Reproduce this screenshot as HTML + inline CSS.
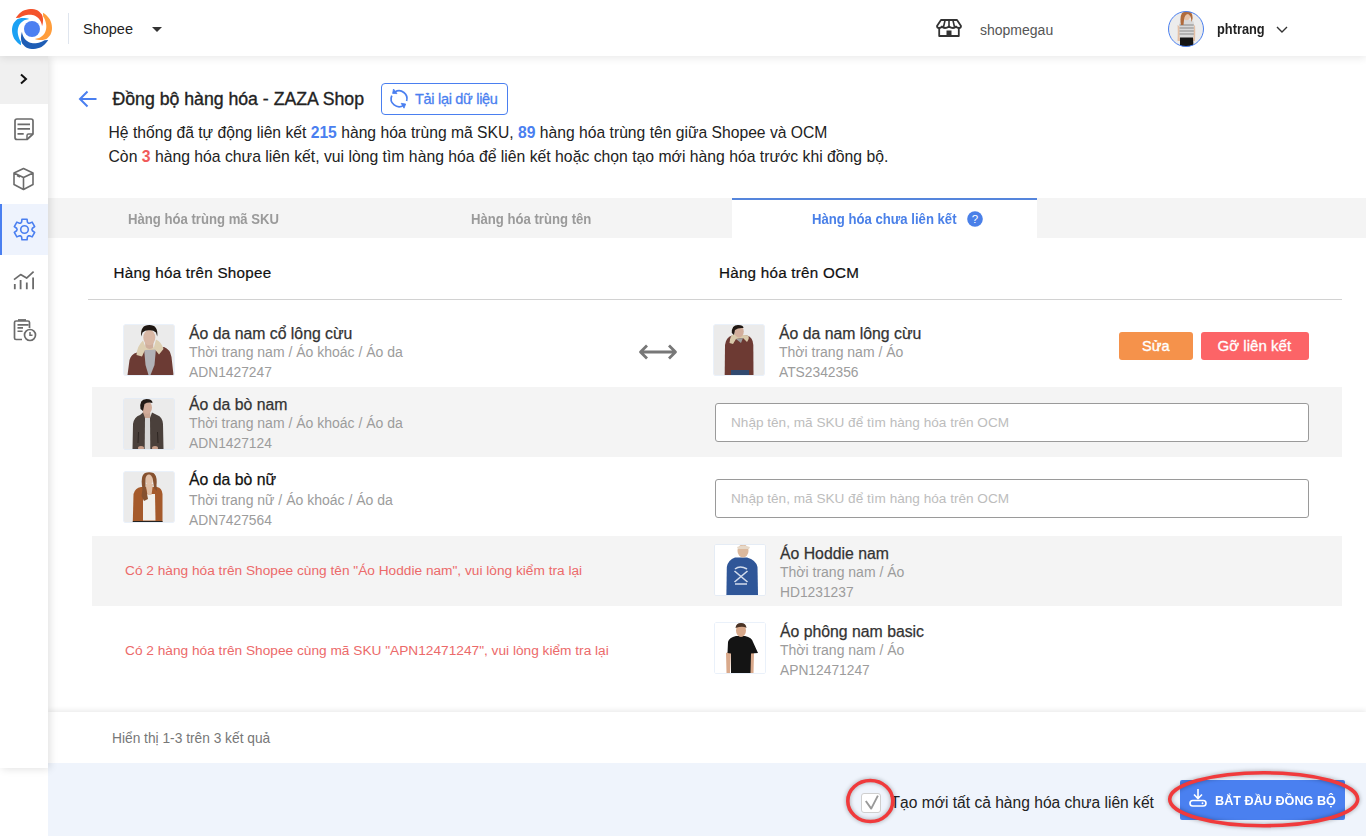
<!DOCTYPE html>
<html><head><meta charset="utf-8"><title>Đồng bộ hàng hóa</title><style>
*{margin:0;padding:0}
html,body{width:1366px;height:836px;overflow:hidden;background:#fff}
body{position:relative;font-family:"Liberation Sans",sans-serif}
.t{position:absolute;white-space:nowrap}
.r{position:absolute;display:block}
.img{width:50px;height:50px;border-radius:1px;overflow:hidden;box-shadow:0 0 0 0.5px #d5e3f5}
.img svg{display:block}
b{font-weight:700}
</style></head>
<body>
<div class="r" style="left:0px;top:0px;width:1366px;height:56px;background:#fff;box-shadow:0 2px 8px rgba(0,0,0,0.09);z-index:5"></div>
<svg class="r" style="left:12px;top:9px;z-index:6" width="40" height="40" viewBox="-20 -20 40 40"><path d="M -16.25 -10.96 L -15.19 -12.59 L -13.97 -14.12 L -12.60 -15.53 L -11.08 -16.81 L -9.43 -17.93 L -7.62 -18.77 L -5.71 -19.36 L -3.76 -19.77 L -1.79 -19.98 L 0.18 -19.98 L 2.13 -19.65 L 4.00 -19.13 L 5.80 -18.43 L 7.36 -17.22 L 8.72 -15.87 L 9.88 -14.41 L 10.58 -12.58 L 10.92 -10.64 L 11.04 -8.81 L 10.90 -7.07 L 10.75 -5.55 L 10.45 -4.15 L 10.00 -2.87 L 9.86 -3.90 L 9.61 -4.92 L 9.30 -5.97 L 8.92 -7.04 L 8.42 -8.09 L 7.81 -9.11 L 7.08 -10.09 L 6.22 -11.01 L 5.26 -11.86 L 4.18 -12.60 L 2.99 -13.18 L 1.73 -13.65 L 0.40 -14.00 L -0.97 -14.22 L -2.39 -14.31 L -3.83 -14.25 L -5.29 -14.05 L -6.74 -13.70 L -8.20 -13.26 L -9.69 -12.72 L -11.15 -12.01 L -12.57 -11.14 Z" fill="#f4532c"/><path d="M -16.25 -10.96 L -15.19 -12.59 L -13.97 -14.12 L -12.60 -15.53 L -11.08 -16.81 L -9.43 -17.93 L -7.62 -18.77 L -5.71 -19.36 L -3.76 -19.77 L -1.79 -19.98 L 0.18 -19.98 L 2.13 -19.65 L 4.00 -19.13 L 5.80 -18.43 L 7.36 -17.22 L 8.72 -15.87 L 9.88 -14.41 L 10.58 -12.58 L 10.92 -10.64 L 11.04 -8.81 L 10.90 -7.07 L 10.75 -5.55 L 10.45 -4.15 L 10.00 -2.87 L 9.86 -3.90 L 9.61 -4.92 L 9.30 -5.97 L 8.92 -7.04 L 8.42 -8.09 L 7.81 -9.11 L 7.08 -10.09 L 6.22 -11.01 L 5.26 -11.86 L 4.18 -12.60 L 2.99 -13.18 L 1.73 -13.65 L 0.40 -14.00 L -0.97 -14.22 L -2.39 -14.31 L -3.83 -14.25 L -5.29 -14.05 L -6.74 -13.70 L -8.20 -13.26 L -9.69 -12.72 L -11.15 -12.01 L -12.57 -11.14 Z" fill="#ff9d3b" transform="rotate(90)"/><path d="M -16.25 -10.96 L -15.19 -12.59 L -13.97 -14.12 L -12.60 -15.53 L -11.08 -16.81 L -9.43 -17.93 L -7.62 -18.77 L -5.71 -19.36 L -3.76 -19.77 L -1.79 -19.98 L 0.18 -19.98 L 2.13 -19.65 L 4.00 -19.13 L 5.80 -18.43 L 7.36 -17.22 L 8.72 -15.87 L 9.88 -14.41 L 10.58 -12.58 L 10.92 -10.64 L 11.04 -8.81 L 10.90 -7.07 L 10.75 -5.55 L 10.45 -4.15 L 10.00 -2.87 L 9.86 -3.90 L 9.61 -4.92 L 9.30 -5.97 L 8.92 -7.04 L 8.42 -8.09 L 7.81 -9.11 L 7.08 -10.09 L 6.22 -11.01 L 5.26 -11.86 L 4.18 -12.60 L 2.99 -13.18 L 1.73 -13.65 L 0.40 -14.00 L -0.97 -14.22 L -2.39 -14.31 L -3.83 -14.25 L -5.29 -14.05 L -6.74 -13.70 L -8.20 -13.26 L -9.69 -12.72 L -11.15 -12.01 L -12.57 -11.14 Z" fill="#1e5db5" transform="rotate(180)"/><path d="M -16.25 -10.96 L -15.19 -12.59 L -13.97 -14.12 L -12.60 -15.53 L -11.08 -16.81 L -9.43 -17.93 L -7.62 -18.77 L -5.71 -19.36 L -3.76 -19.77 L -1.79 -19.98 L 0.18 -19.98 L 2.13 -19.65 L 4.00 -19.13 L 5.80 -18.43 L 7.36 -17.22 L 8.72 -15.87 L 9.88 -14.41 L 10.58 -12.58 L 10.92 -10.64 L 11.04 -8.81 L 10.90 -7.07 L 10.75 -5.55 L 10.45 -4.15 L 10.00 -2.87 L 9.86 -3.90 L 9.61 -4.92 L 9.30 -5.97 L 8.92 -7.04 L 8.42 -8.09 L 7.81 -9.11 L 7.08 -10.09 L 6.22 -11.01 L 5.26 -11.86 L 4.18 -12.60 L 2.99 -13.18 L 1.73 -13.65 L 0.40 -14.00 L -0.97 -14.22 L -2.39 -14.31 L -3.83 -14.25 L -5.29 -14.05 L -6.74 -13.70 L -8.20 -13.26 L -9.69 -12.72 L -11.15 -12.01 L -12.57 -11.14 Z" fill="#1ba1f4" transform="rotate(270)"/><circle cx="0" cy="0" r="8" fill="#4c80f1"/></svg>
<div class="r" style="left:68px;top:13px;width:1px;height:31px;background:#dfe5ee;z-index:6"></div>
<div class="t" style="left:83px;top:20px;font-size:14.5px;line-height:19px;color:#222;font-weight:400;z-index:6">Shopee</div>
<svg class="r" style="left:152px;top:27px;z-index:6" width="10" height="5" viewBox="0 0 10 5"><path d="M0 0 H10 L5 5 Z" fill="#333"/></svg>
<svg class="r" style="left:936px;top:18px;z-index:6" width="26" height="20" viewBox="0 0 26 20"><path d="M5 2 H21 L25 8 Q25 10 23 10 Q21 10 20 8.5 Q19 10 17 10 Q15 10 13 8.5 Q11 10 9 10 Q7 10 6 8.5 Q5 10 3 10 Q1 10 1 8 Z" fill="none" stroke="#333" stroke-width="1.8" stroke-linejoin="round"/><path d="M9 2.5 L7.5 9 M13 2.5 V9 M17 2.5 L18.5 9" stroke="#333" stroke-width="1.6"/><path d="M3.2 10 V18 H22.8 V10" fill="none" stroke="#333" stroke-width="1.8" stroke-linejoin="round"/><rect x="10.5" y="12.5" width="5" height="5.5" fill="#333"/></svg>
<div class="t" style="left:980px;top:21px;font-size:14px;line-height:18px;color:#555;font-weight:400;z-index:6">shopmegau</div>
<svg class="r" style="left:1168px;top:11px;z-index:6" width="36" height="36" viewBox="0 0 36 36"><defs><clipPath id="av"><circle cx="18" cy="18" r="17.5"/></clipPath></defs><g clip-path="url(#av)"><rect width="36" height="36" fill="#ececec"/><path d="M9.5 14 Q10 20 9.5 30 L12 30 L12.5 16 Z M27 14 Q27.5 20 27 30 L24.5 30 L24.5 16 Z" fill="#e3bfa5"/><path d="M11.5 12 Q12.5 9 16 8.5 L22 8.5 Q25.5 9 26 12 L25.5 27 L11.5 27 Z" fill="#d9d9d9"/><path d="M11.5 14 H25.8 M11.5 17 H25.8 M11.5 20 H25.8 M11.5 23 H25.8" stroke="#8a8a8a" stroke-width="1.1"/><path d="M12 26.5 H25 L25.5 36 H12 Z" fill="#141414"/><ellipse cx="18.5" cy="5" rx="3.6" ry="4.3" fill="#e6c3aa"/><path d="M13 14 Q11.5 6 14 2 Q17 -0.5 21.5 0.5 Q25 2 24.5 8 L23.5 11 Q23 4 20 3 Q16.5 3.5 16 9 L15.5 14 Z" fill="#b06b3c"/></g><circle cx="18" cy="18" r="17.5" fill="none" stroke="#4a7fef" stroke-width="1"/></svg>
<div class="t" style="left:1216.5px;top:20px;font-size:14px;line-height:18px;color:#222;font-weight:700;transform:scaleX(0.915);transform-origin:0 0;z-index:6">phtrang</div>
<svg class="r" style="left:1276px;top:26px;z-index:6" width="12" height="8" viewBox="0 0 12 8"><path d="M1 1 L6 6 L11 1" fill="none" stroke="#333" stroke-width="1.4"/></svg>
<div class="r" style="left:0px;top:56px;width:48px;height:712px;background:#fff;box-shadow:2px 1px 8px rgba(0,0,0,0.12);z-index:4"></div>
<div class="r" style="left:0px;top:56px;width:48px;height:48px;background:#f0f0f0;z-index:4"></div>
<svg class="r" style="left:19px;top:73px;z-index:4" width="10" height="12" viewBox="0 0 10 12"><path d="M2 1.5 L7 6 L2 10.5" fill="none" stroke="#111" stroke-width="2"/></svg>
<svg class="r" style="left:13px;top:117px;z-index:4" width="22" height="24" viewBox="0 0 22 24"><path d="M4 2 H18 Q20 2 20 4 V17 L14 22.5 H4 Q2 22.5 2 20.5 V4 Q2 2 4 2 Z" fill="none" stroke="#6b6b6b" stroke-width="1.7" stroke-linejoin="round"/><path d="M20 17 H15.5 Q14 17 14 18.5 V22.5" fill="none" stroke="#6b6b6b" stroke-width="1.5"/><path d="M4.5 7.3 H17 M4.5 11.9 H17 M4.5 16.8 H10.7" stroke="#6b6b6b" stroke-width="1.7"/></svg>
<svg class="r" style="left:12px;top:167px;z-index:4" width="23" height="24" viewBox="0 0 23 24"><path d="M11.5 1.5 L21 6 V17.5 L11.5 22.5 L2 17.5 V6 Z M2 6 L11.5 10.5 L21 6 M11.5 10.5 V22.5" fill="none" stroke="#6b6b6b" stroke-width="1.6" stroke-linejoin="round"/><path d="M5 8.5 L8 10" stroke="#6b6b6b" stroke-width="1.4"/></svg>
<div class="r" style="left:0px;top:204px;width:48px;height:51px;background:#eef3fd;z-index:4"></div>
<div class="r" style="left:0px;top:204px;width:2px;height:51px;background:#4a7ff0;z-index:4"></div>
<svg class="r" style="left:11.8px;top:217px;z-index:4" width="25" height="25" viewBox="-12.5 -12.5 25 25"><path d="M -3.70 -6.41 L -2.87 -7.47 L -2.56 -10.29 L 2.56 -10.29 L 2.87 -7.47 L 3.70 -6.41 L 5.03 -6.22 L 7.63 -7.36 L 10.19 -2.92 L 7.90 -1.25 L 7.40 0.00 L 7.90 1.25 L 10.19 2.92 L 7.63 7.36 L 5.03 6.22 L 3.70 6.41 L 2.87 7.47 L 2.56 10.29 L -2.56 10.29 L -2.87 7.47 L -3.70 6.41 L -5.03 6.22 L -7.63 7.36 L -10.19 2.92 L -7.90 1.25 L -7.40 0.00 L -7.90 -1.25 L -10.19 -2.92 L -7.63 -7.36 L -5.03 -6.22 Z" fill="none" stroke="#4a7ff0" stroke-width="1.6" stroke-linejoin="round"/><circle r="3.8" fill="none" stroke="#4a7ff0" stroke-width="1.6"/></svg>
<svg class="r" style="left:12px;top:268px;z-index:4" width="24" height="24" viewBox="0 0 24 24"><path d="M2 11.6 L8.6 6.6 L14.6 10.1 L21.6 3.6" fill="none" stroke="#6b6b6b" stroke-width="1.7" stroke-linejoin="round"/><path d="M2.8 16 V21.3 M8.6 12 V21.3 M14.8 14.5 V21.3 M21.1 9.5 V21.3" stroke="#6b6b6b" stroke-width="1.8"/></svg>
<svg class="r" style="left:12px;top:318px;z-index:4" width="26" height="24" viewBox="0 0 26 24"><path d="M10 21.5 H4 Q2.5 21.5 2.5 20 V4.5 Q2.5 3 4 3 H16 Q17.5 3 17.5 4.5 V10" fill="none" stroke="#6b6b6b" stroke-width="1.7"/><path d="M5.5 6.9 H16.6 M5.5 9.9 H11 M5.5 13.2 H10.6" stroke="#6b6b6b" stroke-width="1.6"/><path d="M6 2 H14" stroke="#6b6b6b" stroke-width="1.8"/><circle cx="18" cy="17" r="5.5" fill="#fff" stroke="#6b6b6b" stroke-width="1.7"/><path d="M18 14 V17.3 H20.5" fill="none" stroke="#6b6b6b" stroke-width="1.5"/></svg>
<svg class="r" style="left:78px;top:89px" width="20" height="20" viewBox="0 0 20 20"><path d="M18.5 10 H2.5 M9.5 2.5 L2 10 L9.5 17.5" fill="none" stroke="#4a7ff0" stroke-width="2"/></svg>
<div class="t" style="left:112.5px;top:88px;font-size:17.68px;line-height:23px;color:#222;font-weight:400;-webkit-text-stroke:0.35px #222;">Đồng bộ hàng hóa - ZAZA Shop</div>
<div class="r" style="left:381px;top:83px;width:125px;height:30px;border:1px solid #4a7ff0;border-radius:4px"></div>
<svg class="r" style="left:385px;top:85px" width="28" height="28" viewBox="0 0 28 28"><g fill="none" stroke="#4a7ff0" stroke-width="1.7"><path d="M 6.8 10.6 A 7.9 7.9 0 0 0 18.7 20.1"/><path d="M 21.6 16.0 A 7.9 7.9 0 0 0 9.9 7.0"/></g><path d="M 16.2 18.3 L 20.7 19.0 L 19.0 23.2 Z M 8.5 4.0 L 7.6 8.4 L 12.0 8.6 Z" fill="#4a7ff0" stroke="#4a7ff0" stroke-width="0.8" stroke-linejoin="round"/></svg>
<div class="t" style="left:415px;top:90px;font-size:14.5px;line-height:19px;color:#4a7ff0;font-weight:400;-webkit-text-stroke:0.3px #4a7ff0;letter-spacing:-0.3px;">Tải lại dữ liệu</div>
<div class="t" style="left:108.5px;top:123px;font-size:15.68px;line-height:20px;color:#222;font-weight:400;">Hệ thống đã tự động liên kết <b style="color:#4a7ff0">215</b> hàng hóa trùng mã SKU, <b style="color:#4a7ff0">89</b> hàng hóa trùng tên giữa Shopee và OCM</div>
<div class="t" style="left:108.5px;top:147px;font-size:15.76px;line-height:20px;color:#222;font-weight:400;">Còn <b style="color:#f05a5a">3</b> hàng hóa chưa liên kết, vui lòng tìm hàng hóa để liên kết hoặc chọn tạo mới hàng hóa trước khi đồng bộ.</div>
<div class="r" style="left:48px;top:198px;width:1318px;height:40px;background:#f4f4f4"></div>
<div class="r" style="left:732px;top:198px;width:305px;height:40px;background:#fff;border-top:2px solid #5585dc;box-sizing:border-box"></div>
<div class="t" style="left:128px;top:210px;font-size:14.6px;line-height:19px;color:#9a9a9a;font-weight:700;transform:scaleX(0.9);transform-origin:0 0;">Hàng hóa trùng mã SKU</div>
<div class="t" style="left:471px;top:210px;font-size:14.6px;line-height:19px;color:#9a9a9a;font-weight:700;transform:scaleX(0.9);transform-origin:0 0;">Hàng hóa trùng tên</div>
<div class="t" style="left:812px;top:210px;font-size:14.6px;line-height:19px;color:#4a80e8;font-weight:700;transform:scaleX(0.9);transform-origin:0 0;">Hàng hóa chưa liên kết</div>
<svg class="r" style="left:967px;top:211px" width="16" height="16" viewBox="0 0 16 16"><circle cx="8" cy="8" r="7.8" fill="#4a80e8"/><text x="8" y="12.2" text-anchor="middle" font-family="Liberation Sans" font-weight="400" font-size="11.5" fill="#fff">?</text></svg>
<div class="t" style="left:113.5px;top:263px;font-size:15.2px;line-height:20px;color:#111;font-weight:400;-webkit-text-stroke:0.22px #111;letter-spacing:0.25px;">Hàng hóa trên Shopee</div>
<div class="t" style="left:719px;top:263px;font-size:15.2px;line-height:20px;color:#111;font-weight:400;-webkit-text-stroke:0.22px #111;letter-spacing:0.25px;">Hàng hóa trên OCM</div>
<div class="r" style="left:88px;top:299px;width:1254px;height:1px;background:#d2d2d2"></div>
<div class="r" style="left:92px;top:387px;width:1250px;height:69.5px;background:#f4f4f4"></div>
<div class="r" style="left:92px;top:536px;width:1250px;height:70px;background:#f4f4f4"></div>
<div class="r img" style="left:124px;top:325px"><svg width="50" height="50" viewBox="0 0 50 50"><rect width="50" height="50" fill="#ebebeb"/><path d="M3.5 50 L5.5 35 Q7 29 13 27.5 L20 24 L32 24 L40 22 Q46 24 47.5 32 L49.5 50 Z" fill="#6c3b34"/><path d="M20 23 L32 23 L30.5 40 L26.5 50 L24.5 50 L21.5 40 Z" fill="#b1b1b6"/><path d="M21 16 H29.5 L29 25 H21.5 Z" fill="#cfae9c"/><path d="M12.5 30 Q13 21 19 15.5 L21.5 22 Q25.5 26 30 22 L32 14.5 Q37.5 17 39.5 24 L35 29.5 L31 24.5 L21 25 L18 31.5 Z" fill="#ddcfb2"/><ellipse cx="25.3" cy="12.5" rx="6" ry="7.8" fill="#d8b7a5"/><path d="M17.2 11.5 Q16 0 25.3 0 Q34.5 0 33.2 11.5 L32 7.5 Q29 4.8 25.3 5.2 Q21.5 4.8 18.5 7.5 Z" fill="#1f1713"/></svg></div>
<div class="t" style="left:189px;top:323px;font-size:15.8px;line-height:21px;color:#333;font-weight:400;-webkit-text-stroke:0.25px #333;">Áo da nam cổ lông cừu</div>
<div class="t" style="left:189px;top:343px;font-size:14px;line-height:18px;color:#9c9c9c;font-weight:400;">Thời trang nam / Áo khoác / Áo da</div>
<div class="t" style="left:189px;top:364px;font-size:13.8px;line-height:18px;color:#9c9c9c;font-weight:400;">ADN1427247</div>
<div class="r img" style="left:124px;top:399px"><svg width="50" height="50" viewBox="0 0 50 50"><rect width="50" height="50" fill="#ebebeb"/><path d="M19 11 H26 L26.5 19 H18.5 Z" fill="#c9a592"/><path d="M8.5 50 L9 25 Q10 18 16 16 L19 13.5 L21 19 L26 19 L28 13.5 L33 16 Q38.5 18 39 25 L39.5 50 Z" fill="#4a403b"/><path d="M21 19 L26 19 L26.3 50 L20.7 50 Z" fill="#d6d6d6"/><path d="M14 44 L14.5 33 M34 44 L33.5 33" stroke="#2e2622" stroke-width="1"/><ellipse cx="23" cy="8.5" rx="5" ry="6.5" fill="#d1ac9a"/><path d="M16.5 10 Q15 0 22.5 0 Q28.5 0 28.5 4 Q24 2.8 20.5 5 L19 12 Z" fill="#231b17"/><ellipse cx="17" cy="49" rx="3" ry="2" fill="#caa08c"/><ellipse cx="31" cy="49" rx="3" ry="2" fill="#caa08c"/></svg></div>
<div class="t" style="left:189px;top:394px;font-size:15.8px;line-height:21px;color:#333;font-weight:400;-webkit-text-stroke:0.25px #333;">Áo da bò nam</div>
<div class="t" style="left:189px;top:414px;font-size:14px;line-height:18px;color:#9c9c9c;font-weight:400;">Thời trang nam / Áo khoác / Áo da</div>
<div class="t" style="left:189px;top:435px;font-size:13.8px;line-height:18px;color:#9c9c9c;font-weight:400;">ADN1427124</div>
<div class="r img" style="left:124px;top:472px"><svg width="50" height="50" viewBox="0 0 50 50"><rect width="50" height="50" fill="#ebebeb"/><path d="M8.8 50 L9.5 22 Q11 16 17 15 L33 15 Q38 16 38.5 22 L38.5 50 Z" fill="#a55a2b"/><path d="M19 22 L31 22 L31.5 48.5 L19 48.5 Z" fill="#f1efeb"/><path d="M8.8 49 H38.5 V50 H8.8 Z" fill="#222"/><path d="M21.5 12 L29 12 L27.5 23 L23.5 23 Z" fill="#e0bfa6"/><ellipse cx="25.2" cy="7.5" rx="3.7" ry="5.5" fill="#e2c1a9"/><path d="M18.5 17 Q16 4 21 1 Q25 -0.5 29.5 1 Q33.5 4 32.5 13 L33 19 L30 16 L28.8 7 Q27.5 2.5 25 2.5 Q22 2.5 21.5 7 L21.5 14 L24 27 L20 29 L17.5 24 Z" fill="#86512f"/></svg></div>
<div class="t" style="left:189px;top:469px;font-size:15.8px;line-height:21px;color:#111;font-weight:400;-webkit-text-stroke:0.25px #111;">Áo da bò nữ</div>
<div class="t" style="left:189px;top:491px;font-size:14px;line-height:18px;color:#9c9c9c;font-weight:400;">Thời trang nữ / Áo khoác / Áo da</div>
<div class="t" style="left:189px;top:512px;font-size:13.8px;line-height:18px;color:#9c9c9c;font-weight:400;">ADN7427564</div>
<svg class="r" style="left:638px;top:343px" width="40" height="18" viewBox="0 0 40 18"><path d="M2.5 9 H37.5 M9 2.5 L2.5 9 L9 15.5 M31 2.5 L37.5 9 L31 15.5" fill="none" stroke="#777" stroke-width="2.8" stroke-linejoin="round"/></svg>
<div class="r img" style="left:714px;top:325px"><svg width="50" height="50" viewBox="0 0 50 50"><rect width="50" height="50" fill="#ebebeb"/><path d="M10.7 50 L11 20 Q12 12 18 10.5 L33 10.5 Q39 12 39.3 20 L39.5 50 Z" fill="#6d3a33"/><path d="M17 45 H35 V50 H17 Z" fill="#31496f"/><path d="M15.5 18 Q16 10 20 9 L34 10.5 Q36 13 33 17 L29 13 L22 14 L19 19 Z" fill="#d8c9aa"/><path d="M22 14 L29 13 L27 18 Z" fill="#9c9c9c"/><ellipse cx="25" cy="6.5" rx="4.8" ry="6" fill="#d2ae9c"/><path d="M17.8 8 Q17.5 0 24 0 Q29.5 0 29.5 3 Q24 2.5 21 5 L20 10 Z" fill="#1f1713"/></svg></div>
<div class="t" style="left:779px;top:323px;font-size:15.8px;line-height:21px;color:#333;font-weight:400;-webkit-text-stroke:0.25px #333;">Áo da nam lông cừu</div>
<div class="t" style="left:779px;top:343px;font-size:14px;line-height:18px;color:#9c9c9c;font-weight:400;">Thời trang nam / Áo</div>
<div class="t" style="left:779px;top:364px;font-size:13.8px;line-height:18px;color:#9c9c9c;font-weight:400;">ATS2342356</div>
<div class="r" style="left:1119px;top:332px;width:74px;height:28px;background:#f5924b;border-radius:3px"></div>
<div class="t" style="left:1142px;top:337px;font-size:14.5px;line-height:19px;color:#fff;font-weight:400;-webkit-text-stroke:0.35px #fff;">Sửa</div>
<div class="r" style="left:1201px;top:332px;width:108px;height:28px;background:#fc6467;border-radius:3px"></div>
<div class="t" style="left:1217.5px;top:336px;font-size:15.1px;line-height:20px;color:#fff;font-weight:400;-webkit-text-stroke:0.3px #fff;">Gỡ liên kết</div>
<div class="r" style="left:715px;top:403px;width:594px;height:39px;background:#fff;border:1px solid #9a9a9a;border-radius:3px;box-sizing:border-box"></div>
<div class="t" style="left:731px;top:414px;font-size:13.6px;line-height:18px;color:#bdbdbd;font-weight:400;">Nhập tên, mã SKU để tìm hàng hóa trên OCM</div>
<div class="r" style="left:715px;top:479px;width:594px;height:39px;background:#fff;border:1px solid #9a9a9a;border-radius:3px;box-sizing:border-box"></div>
<div class="t" style="left:731px;top:490px;font-size:13.6px;line-height:18px;color:#bdbdbd;font-weight:400;">Nhập tên, mã SKU để tìm hàng hóa trên OCM</div>
<div class="t" style="left:125px;top:562px;font-size:13.7px;line-height:18px;color:#ec6a6a;font-weight:400;">Có 2 hàng hóa trên Shopee cùng tên "Áo Hoddie nam", vui lòng kiểm tra lại</div>
<div class="t" style="left:125px;top:642px;font-size:13.7px;line-height:18px;color:#ec6a6a;font-weight:400;">Có 2 hàng hóa trên Shopee cùng mã SKU "APN12471247", vui lòng kiểm tra lại</div>
<div class="r img" style="left:715px;top:545px"><svg width="50" height="50" viewBox="0 0 50 50"><rect width="50" height="50" fill="#fff"/><path d="M11.4 50 L11.8 22 Q13 15 20 12.5 L32 12.5 Q41 15 42.5 22 L43 50 Z" fill="#2f5698"/><path d="M20 24 Q25 20 32 24 M19.5 26 L32.5 37 M32.5 26 L19.5 37 M20 39 H32" stroke="#d3dcec" stroke-width="1.6" fill="none"/><ellipse cx="28" cy="6" rx="5.5" ry="6.5" fill="#dcb99d"/><path d="M22 2 Q28 -1 35 2 L34 4 L23 4 Z" fill="#e6d8c8"/></svg></div>
<div class="t" style="left:780px;top:543px;font-size:15.8px;line-height:21px;color:#333;font-weight:400;-webkit-text-stroke:0.25px #333;">Áo Hoddie nam</div>
<div class="t" style="left:780px;top:563px;font-size:14px;line-height:18px;color:#9c9c9c;font-weight:400;">Thời trang nam / Áo</div>
<div class="t" style="left:780px;top:584px;font-size:13.8px;line-height:18px;color:#9c9c9c;font-weight:400;">HD1231237</div>
<div class="r img" style="left:715px;top:623px"><svg width="50" height="50" viewBox="0 0 50 50"><rect width="50" height="50" fill="#fff"/><path d="M11.5 50 L11 30 L16 28 L15 50 Z M38.5 50 L39 30 L34 28 L35 50 Z" fill="#d9a98b"/><path d="M12.5 30 L13 19 Q14 14.5 21 13 L30 13 Q37 14.5 38 19 L43 30 L36 30.5 L35.5 50 L16 50 L16 30.5 Z" fill="#141414"/><ellipse cx="26" cy="7.5" rx="5" ry="6.5" fill="#d8a98b"/><path d="M20.5 5 Q21 0 26 0 Q31 0 31.5 5 Q28 2.5 20.5 5 Z" fill="#4a3325"/></svg></div>
<div class="t" style="left:780px;top:621px;font-size:15.8px;line-height:21px;color:#333;font-weight:400;-webkit-text-stroke:0.25px #333;">Áo phông nam basic</div>
<div class="t" style="left:780px;top:641px;font-size:14px;line-height:18px;color:#9c9c9c;font-weight:400;">Thời trang nam / Áo</div>
<div class="t" style="left:780px;top:662px;font-size:13.8px;line-height:18px;color:#9c9c9c;font-weight:400;">APN12471247</div>
<div class="r" style="left:48px;top:712px;width:1318px;height:51px;background:#fff;box-shadow:0 -2px 5px rgba(0,0,0,0.08)"></div>
<div class="t" style="left:112px;top:730px;font-size:13.75px;line-height:18px;color:#777;font-weight:400;">Hiển thị 1-3 trên 3 kết quả</div>
<div class="r" style="left:48px;top:763px;width:1318px;height:73px;background:#eff4fc"></div>
<div class="r" style="left:861px;top:793px;width:20px;height:20px;background:#fff;border:1px solid #cfcfcf;border-radius:3px;box-sizing:border-box"></div>
<svg class="r" style="left:862px;top:794px" width="18" height="18" viewBox="0 0 18 18"><path d="M3.8 7 L9.2 14.6 L15.9 1.6" fill="none" stroke="#999" stroke-width="1.9" stroke-linejoin="round"/></svg>
<div class="t" style="left:890.5px;top:793px;font-size:15.6px;line-height:20px;color:#222;font-weight:400;">Tạo mới tất cả hàng hóa chưa liên kết</div>
<div class="r" style="left:1180px;top:780px;width:165px;height:40px;background:#4a80f0;border-radius:2px"></div>
<svg class="r" style="left:1188px;top:788px" width="20" height="20" viewBox="0 0 20 20"><path d="M10 1 V10 M6 6.5 L10 10.5 L14 6.5" fill="none" stroke="#fff" stroke-width="1.6"/><rect x="2" y="12.5" width="16" height="5.5" rx="2.75" fill="none" stroke="#fff" stroke-width="1.6"/><circle cx="14.5" cy="15.25" r="0.9" fill="#fff"/></svg>
<div class="t" style="left:1214.5px;top:792px;font-size:13.4px;line-height:17px;color:#fff;font-weight:700;transform:scaleX(0.945);transform-origin:0 0;">BẮT ĐẦU ĐỒNG BỘ</div>
<svg class="r" style="left:0;top:0;z-index:10" width="1366" height="836" viewBox="0 0 1366 836"><g fill="none" stroke="#f03a3c" stroke-width="3.6" style="filter:drop-shadow(0 0 2px rgba(0,0,0,0.35))"><ellipse cx="870.3" cy="801" rx="22.5" ry="20.5"/><ellipse cx="1263.7" cy="799.2" rx="94" ry="26.5"/></g></svg>

</body></html>
